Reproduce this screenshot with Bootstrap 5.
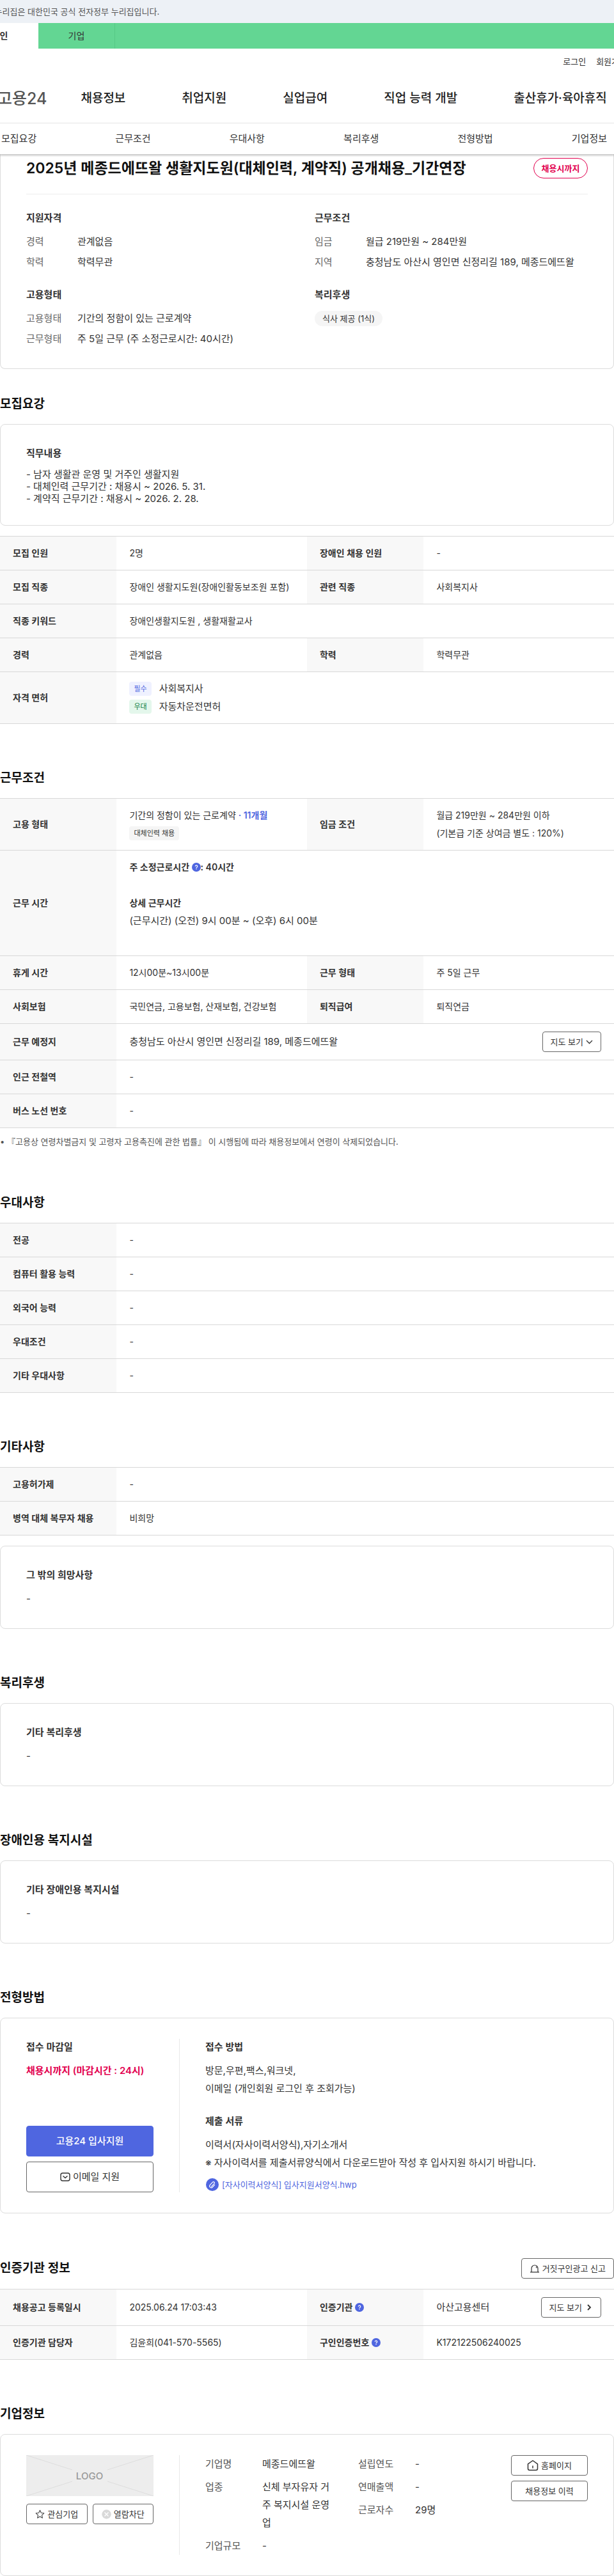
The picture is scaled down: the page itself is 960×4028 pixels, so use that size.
<!DOCTYPE html>
<html lang="ko">
<head>
<meta charset="utf-8">
<meta name="viewport" content="width=device-width, initial-scale=1">
<title>채용정보 상세 - 고용24</title>
<link href="https://cdn.jsdelivr.net/npm/bootstrap@5.3.0/dist/css/bootstrap.min.css" rel="stylesheet">
<style>
  :root { --ink:#333; --soft:#555; --line:#d8d8d8; --blue:#4f66e0; --red:#e2004f; }
  body { font-family: Inter, "Noto Sans CJK KR", sans-serif; font-size:15px; line-height:28px; color:var(--ink); overflow-x:hidden; }
  h1,h2,h3,p,dl,dd,dt,ul { margin:0; padding:0; font-weight:400; }
  ul { list-style:none; }
  a { color:inherit; text-decoration:none; white-space:nowrap; }
  .gov { height:36px; line-height:36px; font-size:13px; color:var(--soft); background:#edf1f6; overflow:hidden; }
  .gov p { margin-left:-24px; white-space:nowrap; }
  .tabs { height:40px; background:#63d693; }
  .tabs a { width:120px; text-align:center; line-height:40px; font-size:14px; border-right:1px solid #56c985; }
  .tabs a.on { margin-left:-60px; background:#fff; font-weight:700; border-color:#fff; }
  .clip { overflow:hidden; }
  .util { height:40px; gap:16px; font-size:13px; margin-right:-20px; }
  .gnb { height:76px; gap:88px; font-size:19px; font-weight:500; color:#222; }
  .brand24 { font-size:25px; font-weight:500; color:#555; margin-left:-4px; margin-right:-35px; }
  .lnb { height:49px; padding:0 11px 0 2px; border-top:1px solid #e6e6e6; box-shadow:0 2px 3px rgba(0,0,0,.25); position:relative; z-index:1; background:#fff; }
  .panel { border:1px solid #dcdcdc; border-radius:8px; padding:32px 40px; background:#fff; }
  .summary { border-top:0; border-radius:0 0 8px 8px; padding-top:6px; }
  .summary h1 { font-size:23px; line-height:32px; font-weight:600; color:#111; white-space:nowrap; }
  .until { border:1px solid var(--red); border-radius:16px; height:32px; line-height:30px; width:85px; text-align:center; font-size:13px; font-weight:700; color:var(--red); }
  .rule { border-top:1px solid #eee; margin:24px 0; }
  .panel h3 { font-size:15px; line-height:26px; font-weight:600; margin-bottom:10px; }
  .strong-t { font-weight:600; }
  .pairs > div { display:flex; margin-bottom:4px; }
  .pairs > div:last-child { margin-bottom:0; }
  .pairs dt { width:80px; flex:none; color:#666; }
  .pairs + h3 { margin-top:24px; }
  .pill { background:#f5f5f5; border-radius:12px; line-height:24px; padding:0 12px; font-size:13px; display:inline-block; }
  .duty { line-height:19px; }
  .sec { padding-top:70px; }
  .sec.first { padding-top:40px; }
  .sec-head { min-height:30px; margin-bottom:16px; }
  .sec h2 { font-size:19px; line-height:30px; font-weight:600; color:#111; }
  .info { width:100%; table-layout:fixed; border-top:1px solid var(--line); font-size:14px; margin:0; }
  .info th, .info td { padding:12px 20px; border-bottom:1px solid var(--line); vertical-align:middle; }
  .info th { background:#f8f8f8; font-weight:600; white-space:nowrap; }
  .c-th { width:19%; } .c-td { width:31%; }
  .gap-t { margin-top:16px; }
  .txt { font-size:15px; }
  .tag { font-size:11px; line-height:22px; padding:0 7px; border-radius:4px; background:#f5f5f5; display:inline-block; }
  .tag-need { background:#eff1ff; color:#4f66e0; } .tag-plus { background:#e4f7ec; color:#118244; }
  .lic { height:28px; gap:12px; }
  .hot { color:var(--blue); font-weight:600; }
  .note { font-size:13px; line-height:22px; padding:10px 0 0; color:var(--soft); }
  .b-line { height:32px; border:1px solid #666; border-radius:4px; background:#fff; color:var(--ink); font-size:13px; padding:0 12px; display:inline-flex; align-items:center; justify-content:center; gap:4px; line-height:30px; white-space:nowrap; }
  .b-big { height:48px; width:100%; font-size:15px; border-radius:4px; padding:0; }
  .b-fill { background:var(--blue); border:1px solid var(--blue); color:#fff; font-weight:500; }
  .side { width:240px; flex:none; padding-right:40px; border-right:1px solid #e8e8e8; }
  .side .b-line.flex-fill { padding:0 4px; }
  .body-col { padding-left:40px; }
  .due { color:var(--red); font-weight:600; white-space:nowrap; }
  .file { color:var(--blue); font-size:13px; line-height:24px; }
  .q { border:0; padding:0; background:none; line-height:1; vertical-align:-2px; }
  .q svg { display:block; }
  .logo-box { background:#ededed; height:64px; }
  .corp { gap:8px; }
  .corp > div { display:flex; }
  .corp dt { width:89px; flex:none; color:var(--soft); }
  .corp-a { width:202px; margin-right:37px; }
  .corp-a, .corp-b { display:flex; flex-direction:column; }
  .acts { width:120px; flex:none; gap:8px; }
</style>
</head>
<body>
<svg width="0" height="0" class="d-none">
  <symbol id="help" viewBox="0 0 14 14"><circle cx="7" cy="7" r="7" fill="#4f66e0"/><path d="M5.3 5.7a1.7 1.6 0 1 1 2.5 1.4c-.6.3-.8.5-.8 1.1" fill="none" stroke="#fff" stroke-width="1.2"/><circle cx="7" cy="9.8" r=".8" fill="#fff"/></symbol>
</svg>

<div class="gov"><p>이 누리집은 대한민국 공식 전자정부 누리집입니다.</p></div>
<nav class="tabs d-flex clip"><a href="#" class="on">개인</a><a href="#">기업</a></nav>
<header class="clip">
  <ul class="util d-flex justify-content-end align-items-center"><li><a href="#">로그인</a></li><li><a href="#">회원가입</a></li></ul>
  <nav class="gnb d-flex align-items-center">
    <a href="#" class="brand24">고용24</a><a href="#">채용정보</a><a href="#">취업지원</a><a href="#">실업급여</a><a href="#">직업 능력 개발</a><a href="#">출산휴가·육아휴직</a>
  </nav>
</header>
<nav class="lnb d-flex justify-content-between align-items-center">
  <a href="#recruit">모집요강</a><a href="#work">근무조건</a><a href="#prefer">우대사항</a><a href="#welfare">복리후생</a><a href="#apply">전형방법</a><a href="#company">기업정보</a>
</nav>

<main>
  <section class="panel summary">
    <div class="d-flex justify-content-between align-items-center">
      <h1>2025년 메종드에뜨왈 생활지도원(대체인력, 계약직) 공개채용_기간연장</h1>
      <span class="until">채용시까지</span>
    </div>
    <div class="rule"></div>
    <div class="row gx-4">
      <div class="col-6">
        <h3>지원자격</h3>
        <dl class="pairs"><div><dt>경력</dt><dd>관계없음</dd></div><div><dt>학력</dt><dd>학력무관</dd></div></dl>
        <h3>고용형태</h3>
        <dl class="pairs"><div><dt>고용형태</dt><dd>기간의 정함이 있는 근로계약</dd></div><div><dt>근무형태</dt><dd>주 5일 근무 (주 소정근로시간: 40시간)</dd></div></dl>
      </div>
      <div class="col-6">
        <h3>근무조건</h3>
        <dl class="pairs"><div><dt>임금</dt><dd>월급 219만원 ~ 284만원</dd></div><div><dt>지역</dt><dd>충청남도 아산시 영인면 신정리길 189, 메종드에뜨왈</dd></div></dl>
        <h3>복리후생</h3>
        <span class="pill">식사 제공 (1식)</span>
      </div>
    </div>
  </section>

  <section class="sec first" id="recruit">
    <div class="sec-head"><h2>모집요강</h2></div>
    <div class="panel"><h3>직무내용</h3><p class="duty">- 남자 생활관 운영 및 거주인 생활지원<br>- 대체인력 근무기간 : 채용시 ~ 2026. 5. 31.<br>- 계약직 근무기간 : 채용시 ~ 2026. 2. 28.</p></div>
    <table class="info gap-t">
      <colgroup><col class="c-th"><col class="c-td"><col class="c-th"><col class="c-td"></colgroup>
      <tr><th>모집 인원</th><td>2명</td><th>장애인 채용 인원</th><td>-</td></tr>
      <tr><th>모집 직종</th><td class="text-nowrap">장애인 생활지도원(장애인활동보조원 포함)</td><th>관련 직종</th><td>사회복지사</td></tr>
      <tr><th>직종 키워드</th><td colspan="3">장애인생활지도원 , 생활재활교사</td></tr>
      <tr><th>경력</th><td>관계없음</td><th>학력</th><td>학력무관</td></tr>
      <tr><th>자격 면허</th><td colspan="3" class="txt">
        <div class="lic d-flex align-items-center"><span class="tag tag-need">필수</span>사회복지사</div>
        <div class="lic d-flex align-items-center"><span class="tag tag-plus">우대</span>자동차운전면허</div></td></tr>
    </table>
  </section>

  <section class="sec" id="work">
    <div class="sec-head"><h2>근무조건</h2></div>
    <table class="info">
      <colgroup><col class="c-th"><col class="c-td"><col class="c-th"><col class="c-td"></colgroup>
      <tr><th>고용 형태</th><td class="text-nowrap">기간의 정함이 있는 근로계약 <span class="hot">· 11개월</span><div class="lic d-flex align-items-center"><span class="tag">대체인력 채용</span></div></td><th>임금 조건</th><td>월급 219만원 ~ 284만원 이하<br>(기본급 기준 상여금 별도 : 120%)</td></tr>
      <tr><th>근무 시간</th><td colspan="3"><span class="strong-t">주 소정근로시간 <button class="q" type="button" aria-label="도움말"><svg width="14" height="14"><use href="#help"/></svg></button>: 40시간</span><br><br><span class="strong-t">상세 근무시간</span><br><span class="txt">(근무시간) (오전) 9시 00분 ~ (오후) 6시 00분</span><br><br></td></tr>
      <tr><th>휴게 시간</th><td>12시00분~13시00분</td><th>근무 형태</th><td>주 5일 근무</td></tr>
      <tr><th>사회보험</th><td class="text-nowrap">국민연금, 고용보험, 산재보험, 건강보험</td><th>퇴직급여</th><td>퇴직연금</td></tr>
      <tr><th>근무 예정지</th><td colspan="3"><div class="d-flex justify-content-between align-items-center txt">충청남도 아산시 영인면 신정리길 189, 메종드에뜨왈
        <button class="b-line" type="button">지도 보기 <svg width="11" height="11" viewBox="0 0 11 11" fill="none" stroke="#333" stroke-width="1.3"><path d="M1 3l4.500 4.500L10 3"/></svg></button></div></td></tr>
      <tr><th>인근 전철역</th><td colspan="3">-</td></tr>
      <tr><th>버스 노선 번호</th><td colspan="3">-</td></tr>
    </table>
    <p class="note">• 『고용상 연령차별금지 및 고령자 고용촉진에 관한 법률』 이 시행됨에 따라 채용정보에서 연령이 삭제되었습니다.</p>
  </section>

  <section class="sec" id="prefer">
    <div class="sec-head"><h2>우대사항</h2></div>
    <table class="info">
      <colgroup><col class="c-th"><col></colgroup>
      <tr><th>전공</th><td>-</td></tr><tr><th>컴퓨터 활용 능력</th><td>-</td></tr><tr><th>외국어 능력</th><td>-</td></tr><tr><th>우대조건</th><td>-</td></tr><tr><th>기타 우대사항</th><td>-</td></tr>
    </table>
  </section>

  <section class="sec">
    <div class="sec-head"><h2>기타사항</h2></div>
    <table class="info">
      <colgroup><col class="c-th"><col></colgroup>
      <tr><th>고용허가제</th><td>-</td></tr><tr><th>병역 대체 복무자 채용</th><td>비희망</td></tr>
    </table>
    <div class="panel gap-t"><h3>그 밖의 희망사항</h3><p>-</p></div>
  </section>

  <section class="sec" id="welfare">
    <div class="sec-head"><h2>복리후생</h2></div>
    <div class="panel"><h3>기타 복리후생</h3><p>-</p></div>
  </section>

  <section class="sec">
    <div class="sec-head"><h2>장애인용 복지시설</h2></div>
    <div class="panel"><h3>기타 장애인용 복지시설</h3><p>-</p></div>
  </section>

  <section class="sec" id="apply">
    <div class="sec-head"><h2>전형방법</h2></div>
    <div class="panel d-flex">
      <div class="side d-flex flex-column">
        <h3>접수 마감일</h3>
        <p class="due">채용시까지 (마감시간 : 24시)</p>
        <div class="mt-auto d-grid gap-2">
          <button class="b-big b-fill" type="button">고용24 입사지원</button>
          <button class="b-line b-big" type="button"><svg width="16" height="16" viewBox="0 0 16 16" fill="none" stroke="#333" stroke-width="1.4"><rect x="1" y="2" width="14" height="12" rx="3"/><path d="M4.500 6.500L8 9.500l3.500-3"/></svg>이메일 지원</button>
        </div>
      </div>
      <div class="body-col">
        <h3>접수 방법</h3>
        <p>방문,우편,팩스,워크넷,<br>이메일 (개인회원 로그인 후 조회가능)</p>
        <h3 class="mt-4">제출 서류</h3>
        <p>이력서(자사이력서양식),자기소개서<br>※ 자사이력서를 제출서류양식에서 다운로드받아 작성 후 입사지원 하시기 바랍니다.</p>
        <a href="#" class="file d-flex align-items-center gap-1 mt-2"><svg width="22" height="22" viewBox="0 0 22 22"><circle cx="11" cy="11" r="10" fill="#4f66e0"/><path d="M9.500 14.200l4.500-4.800a1.700 1.700 0 0 0-2.500-2.300l-4.300 4.600a2.600 2.600 0 0 0 3.800 3.500l3.600-3.900" fill="none" stroke="#fff" stroke-width="1.2" stroke-linecap="round"/></svg>[자사이력서양식] 입사지원서양식.hwp</a>
      </div>
    </div>
  </section>

  <section class="sec">
    <div class="sec-head d-flex justify-content-between align-items-center"><h2>인증기관 정보</h2>
      <button class="b-line" type="button"><svg width="16" height="14" viewBox="0 0 16 14" fill="none" stroke="#333" stroke-width="1.2"><path d="M3 12.500V7a5 5 0 0 1 10 0v5.500M1 12.800h14M10 4.500a2.600 2.600 0 0 1 1 2"/></svg>거짓구인광고 신고</button></div>
    <table class="info">
      <colgroup><col class="c-th"><col class="c-td"><col class="c-th"><col class="c-td"></colgroup>
      <tr><th>채용공고 등록일시</th><td>2025.06.24 17:03:43</td><th>인증기관 <button class="q" type="button" aria-label="도움말"><svg width="14" height="14"><use href="#help"/></svg></button></th><td><div class="d-flex justify-content-between align-items-center txt">아산고용센터
        <button class="b-line" type="button">지도 보기 <svg width="13" height="12" viewBox="0 0 13 12" fill="none" stroke="#333" stroke-width="1.8"><path d="M5 2l4 4-4 4"/></svg></button></div></td></tr>
      <tr><th>인증기관 담당자</th><td>김윤희(041-570-5565)</td><th>구인인증번호 <button class="q" type="button" aria-label="도움말"><svg width="14" height="14"><use href="#help"/></svg></button></th><td>K172122506240025</td></tr>
    </table>
  </section>

  <section class="sec" id="company">
    <div class="sec-head"><h2>기업정보</h2></div>
    <div class="panel d-flex">
      <div class="side">
        <div class="logo-box mb-1"><svg width="100%" height="64" viewBox="0 0 199 64" preserveAspectRatio="none"><path d="M0 0l72 23M199 0l-72 23M0 64l72-23M199 64l-72-23" stroke="#ddd"/><text x="99" y="38" text-anchor="middle" font-size="15" font-weight="500" fill="#999">LOGO</text></svg></div>
        <div class="d-flex gap-2 pt-2">
          <button class="b-line flex-fill" type="button"><svg width="15" height="15" viewBox="0 0 15 15" fill="none" stroke="#444" stroke-width="1.1" stroke-linejoin="round"><path d="M7.500 1.200l1.900 4.100 4.400.5-3.300 3 .9 4.400-3.900-2.200-3.900 2.200.9-4.400-3.300-3 4.400-.5z"/></svg>관심기업</button>
          <button class="b-line flex-fill" type="button"><svg width="15" height="15" viewBox="0 0 15 15"><circle cx="7.500" cy="7.500" r="7.200" fill="#d9d9d9"/><path d="M4.500 4.500l6 6M10.500 4.500l-6 6" stroke="#fff" stroke-width="1.3"/></svg>열람차단</button>
        </div>
      </div>
      <div class="body-col d-flex flex-fill">
        <dl class="corp corp-a"><div><dt>기업명</dt><dd>메종드에뜨왈</dd></div><div><dt>업종</dt><dd>신체 부자유자 거주 복지시설 운영업</dd></div><div><dt>기업규모</dt><dd>-</dd></div></dl>
        <dl class="corp corp-b"><div><dt>설립연도</dt><dd>-</dd></div><div><dt>연매출액</dt><dd>-</dd></div><div><dt>근로자수</dt><dd>29명</dd></div></dl>
      </div>
      <div class="acts d-flex flex-column">
        <button class="b-line" type="button"><svg width="18" height="18" viewBox="0 0 18 18" fill="none" stroke="#333" stroke-width="1.5" stroke-linejoin="round"><path d="M1.500 6.800L9 1.500l7.500 5.300V14a2.500 2.500 0 0 1-2.500 2.500H4A2.500 2.500 0 0 1 1.500 14zM9 9.500v4"/></svg>홈페이지</button>
        <button class="b-line" type="button">채용정보 이력</button>
      </div>
    </div>
  </section>
</main>
<script src="https://cdn.jsdelivr.net/npm/bootstrap@5.3.0/dist/js/bootstrap.bundle.min.js"></script>
</body>
</html>
